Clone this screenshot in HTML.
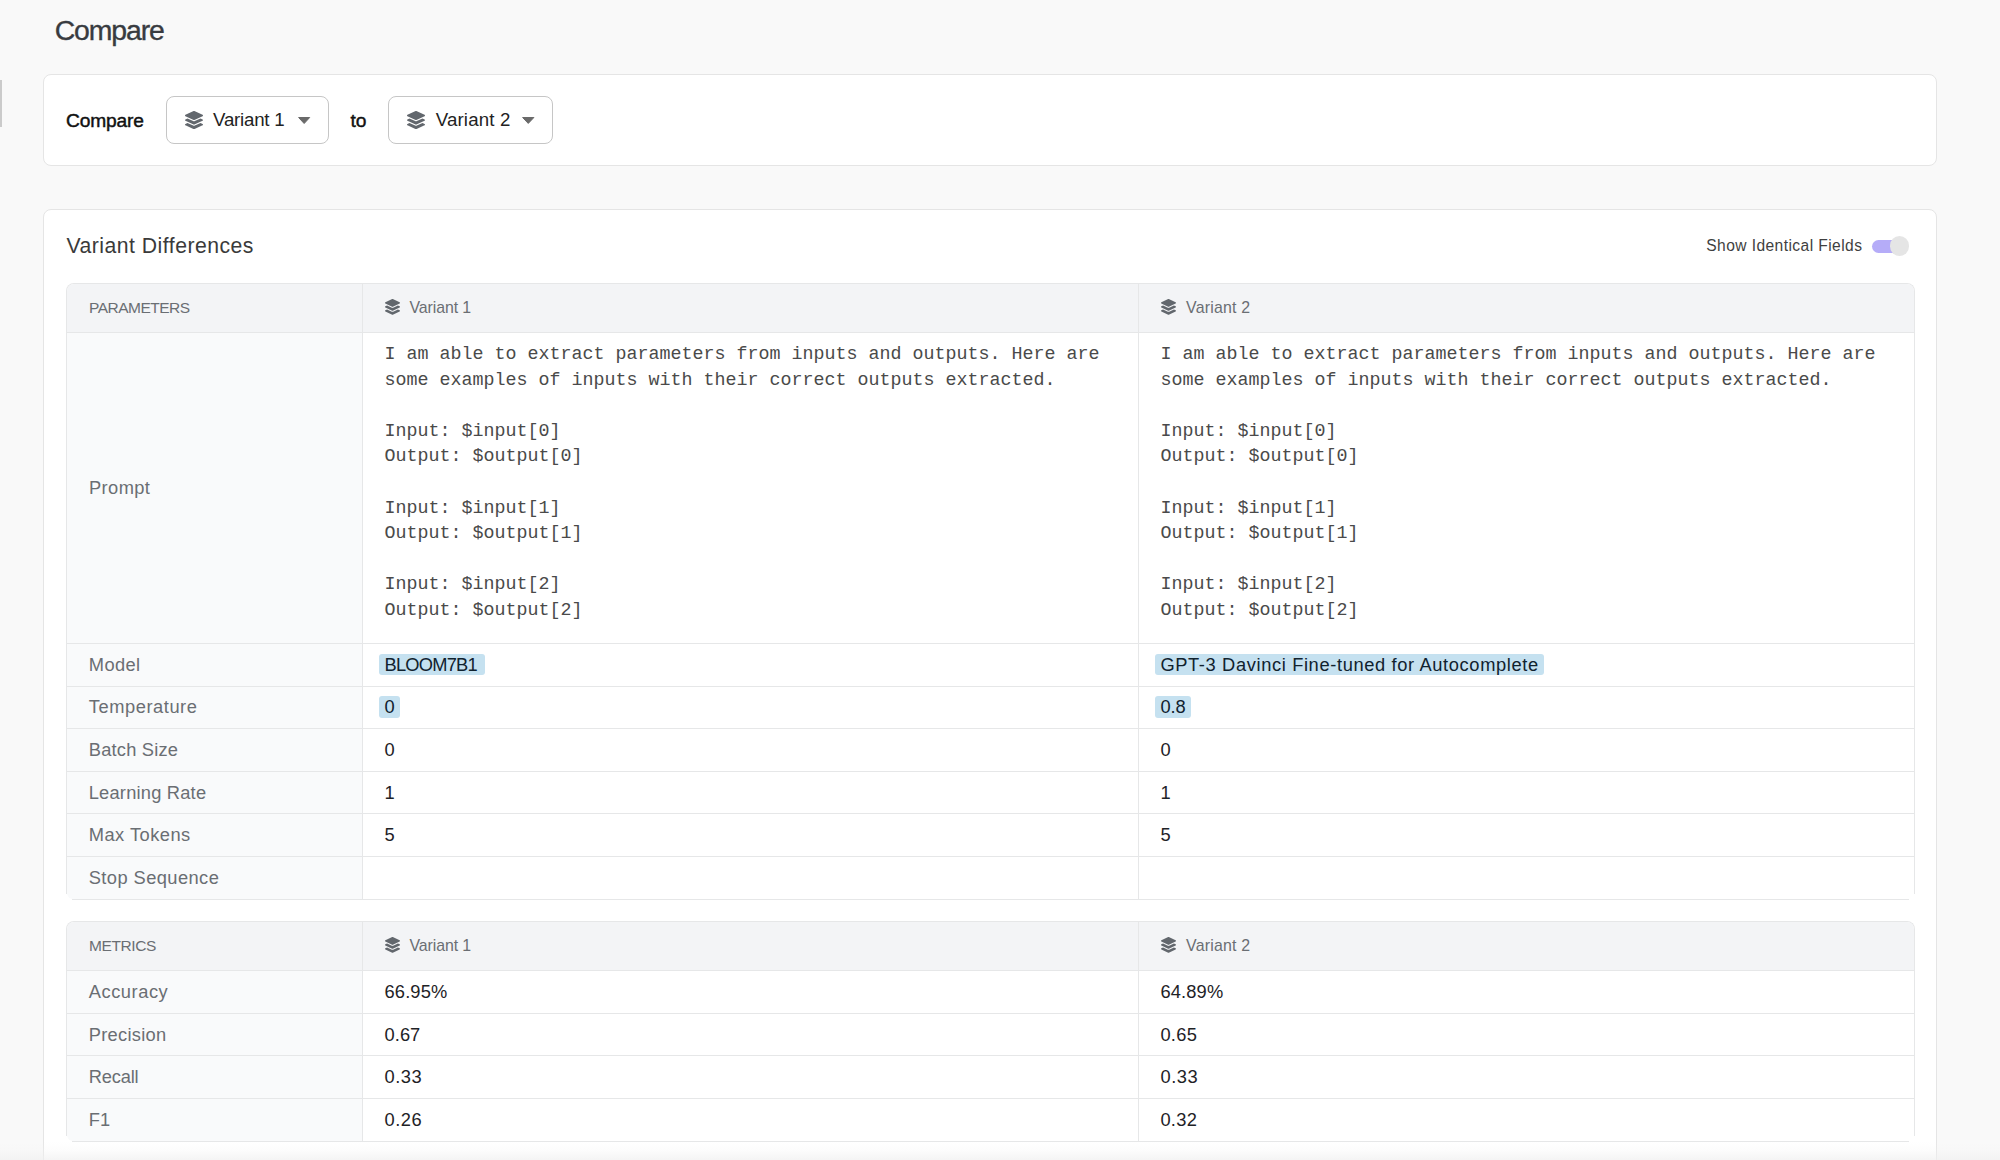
<!DOCTYPE html>
<html><head><meta charset="utf-8"><style>
html,body{margin:0;padding:0}
body{width:2000px;height:1160px;overflow:hidden;position:relative;background:#f9f9f9;font-family:"Liberation Sans",sans-serif}
.t{position:absolute;white-space:nowrap}
</style></head><body>
<div style="position:absolute;left:0px;top:80px;width:1.5px;height:47px;background:#cbcbcb"></div>
<div class="t" style="left:54.70px;top:12.46px;font-size:28.4px;line-height:37px;color:#383b40;letter-spacing:-1.094px;font-family:'Liberation Sans', sans-serif;-webkit-text-stroke:0.35px #383b40">Compare</div>
<div style="position:absolute;left:43px;top:74px;width:1894px;height:92px;background:#fff;border:1px solid #e5e5e5;border-radius:8px;box-sizing:border-box"></div>
<div class="t" style="left:66.00px;top:107.60px;font-size:19.2px;line-height:25px;color:#111;letter-spacing:-0.168px;font-family:'Liberation Sans', sans-serif;-webkit-text-stroke:0.45px #111">Compare</div>
<div style="position:absolute;left:166px;top:96px;width:163px;height:48px;border:1px solid #c6c6c6;border-radius:8px;box-sizing:border-box;background:#fff"></div>
<svg viewBox="0 0 512 512" preserveAspectRatio="none" width="18" height="18.2" style="position:absolute;left:185px;top:110.7px" fill="#62676d"><path d="M12.41 148.02l232.94 105.67c6.8 3.09 14.49 3.09 21.29 0l232.94-105.67c16.55-7.51 16.55-32.52 0-40.03L266.65 2.31a25.607 25.607 0 0 0-21.29 0L12.41 107.98c-16.55 7.51-16.55 32.53 0 40.04zm487.18 88.28l-58.09-26.33-161.64 73.27c-7.56 3.43-15.59 5.17-23.86 5.17s-16.29-1.74-23.86-5.17L70.51 209.97l-58.1 26.33c-16.55 7.5-16.55 32.5 0 40l232.94 105.59c6.8 3.08 14.49 3.08 21.29 0L499.59 276.3c16.55-7.5 16.55-32.5 0-40zm0 127.8l-57.87-26.23-161.86 73.37c-7.56 3.43-15.59 5.17-23.86 5.17s-16.29-1.74-23.86-5.17L70.29 337.87 12.41 364.1c-16.55 7.5-16.55 32.5 0 40l232.94 105.59c6.8 3.08 14.49 3.08 21.29 0L499.59 404.1c16.55-7.5 16.55-32.5 0-40z"/></svg>
<div class="t" style="left:213.10px;top:107.92px;font-size:18.7px;line-height:24px;color:#222;letter-spacing:-0.236px;font-family:'Liberation Sans', sans-serif;">Variant 1</div>
<svg width="14.3" height="8.8" style="position:absolute;left:296.7px;top:116px"><path d="M1.6 1.5 L12.700000000000001 1.5 L7.15 7.5 Z" fill="#6a6a6a" stroke="#6a6a6a" stroke-width="1" stroke-linejoin="round"/></svg>
<div class="t" style="left:350.50px;top:107.60px;font-size:19.2px;line-height:25px;color:#111;letter-spacing:0.000px;font-family:'Liberation Sans', sans-serif;-webkit-text-stroke:0.45px #111">to</div>
<div style="position:absolute;left:388px;top:96px;width:165px;height:48px;border:1px solid #c6c6c6;border-radius:8px;box-sizing:border-box;background:#fff"></div>
<svg viewBox="0 0 512 512" preserveAspectRatio="none" width="18" height="18.2" style="position:absolute;left:407.3px;top:110.6px" fill="#62676d"><path d="M12.41 148.02l232.94 105.67c6.8 3.09 14.49 3.09 21.29 0l232.94-105.67c16.55-7.51 16.55-32.52 0-40.03L266.65 2.31a25.607 25.607 0 0 0-21.29 0L12.41 107.98c-16.55 7.51-16.55 32.53 0 40.04zm487.18 88.28l-58.09-26.33-161.64 73.27c-7.56 3.43-15.59 5.17-23.86 5.17s-16.29-1.74-23.86-5.17L70.51 209.97l-58.1 26.33c-16.55 7.5-16.55 32.5 0 40l232.94 105.59c6.8 3.08 14.49 3.08 21.29 0L499.59 276.3c16.55-7.5 16.55-32.5 0-40zm0 127.8l-57.87-26.23-161.86 73.37c-7.56 3.43-15.59 5.17-23.86 5.17s-16.29-1.74-23.86-5.17L70.29 337.87 12.41 364.1c-16.55 7.5-16.55 32.5 0 40l232.94 105.59c6.8 3.08 14.49 3.08 21.29 0L499.59 404.1c16.55-7.5 16.55-32.5 0-40z"/></svg>
<div class="t" style="left:435.70px;top:107.92px;font-size:18.7px;line-height:24px;color:#222;letter-spacing:0.164px;font-family:'Liberation Sans', sans-serif;">Variant 2</div>
<svg width="14.5" height="8.7" style="position:absolute;left:521px;top:116px"><path d="M1.6 1.5 L12.9 1.5 L7.25 7.4 Z" fill="#6a6a6a" stroke="#6a6a6a" stroke-width="1" stroke-linejoin="round"/></svg>
<div style="position:absolute;left:43px;top:209px;width:1894px;height:1100px;background:#fff;border:1px solid #e5e5e5;border-radius:8px;box-sizing:border-box"></div>
<div class="t" style="left:66.50px;top:231.65px;font-size:21.2px;line-height:28px;color:#3a3a3a;letter-spacing:0.484px;font-family:'Liberation Sans', sans-serif;">Variant Differences</div>
<div class="t" style="left:1706.25px;top:235.69px;font-size:15.6px;line-height:20px;color:#3f3f3f;letter-spacing:0.419px;font-family:'Liberation Sans', sans-serif;">Show Identical Fields</div>
<div style="position:absolute;left:1872px;top:240px;width:34px;height:12.6px;background:#b5acf8;border-radius:7px"></div>
<div style="position:absolute;left:1889.6px;top:236.3px;width:19.6px;height:19.6px;background:#e5e5e5;border-radius:50%"></div>
<div style="position:absolute;left:66px;top:283px;width:1849px;height:611px;border:1px solid #e6e7e8;border-bottom:none;border-radius:8px 8px 0 0;box-sizing:border-box;background:#fff"></div>
<div style="position:absolute;left:67px;top:893px;width:1847px;height:6px;background:#fff"></div>
<div style="position:absolute;left:72px;top:899px;width:1837px;height:1px;background:#e6e7e8"></div>
<div style="position:absolute;left:67px;top:284px;width:1847px;height:48px;background:#f3f4f6;border-radius:7px 7px 0 0"></div>
<div style="position:absolute;left:67px;top:333px;width:295px;height:566px;background:#f9fafb;border-radius:0 0 0 6px"></div>
<div style="position:absolute;left:66px;top:332px;width:1849px;height:1px;background:#e6e7e8"></div>
<div style="position:absolute;left:66px;top:643px;width:1849px;height:1px;background:#e6e7e8"></div>
<div style="position:absolute;left:66px;top:686px;width:1849px;height:1px;background:#e6e7e8"></div>
<div style="position:absolute;left:66px;top:728px;width:1849px;height:1px;background:#e6e7e8"></div>
<div style="position:absolute;left:66px;top:771px;width:1849px;height:1px;background:#e6e7e8"></div>
<div style="position:absolute;left:66px;top:813px;width:1849px;height:1px;background:#e6e7e8"></div>
<div style="position:absolute;left:66px;top:856px;width:1849px;height:1px;background:#e6e7e8"></div>
<div style="position:absolute;left:362px;top:283px;width:1px;height:616px;background:#e6e7e8"></div>
<div style="position:absolute;left:1138px;top:283px;width:1px;height:616px;background:#e6e7e8"></div>
<div class="t" style="left:89.00px;top:297.73px;font-size:15.5px;line-height:20px;color:#6a6e73;letter-spacing:-0.515px;font-family:'Liberation Sans', sans-serif;">PARAMETERS</div>
<svg viewBox="0 0 512 512" preserveAspectRatio="none" width="15" height="15.8" style="position:absolute;left:385px;top:299.0px" fill="#62676d"><path d="M12.41 148.02l232.94 105.67c6.8 3.09 14.49 3.09 21.29 0l232.94-105.67c16.55-7.51 16.55-32.52 0-40.03L266.65 2.31a25.607 25.607 0 0 0-21.29 0L12.41 107.98c-16.55 7.51-16.55 32.53 0 40.04zm487.18 88.28l-58.09-26.33-161.64 73.27c-7.56 3.43-15.59 5.17-23.86 5.17s-16.29-1.74-23.86-5.17L70.51 209.97l-58.1 26.33c-16.55 7.5-16.55 32.5 0 40l232.94 105.59c6.8 3.08 14.49 3.08 21.29 0L499.59 276.3c16.55-7.5 16.55-32.5 0-40zm0 127.8l-57.87-26.23-161.86 73.37c-7.56 3.43-15.59 5.17-23.86 5.17s-16.29-1.74-23.86-5.17L70.29 337.87 12.41 364.1c-16.55 7.5-16.55 32.5 0 40l232.94 105.59c6.8 3.08 14.49 3.08 21.29 0L499.59 404.1c16.55-7.5 16.55-32.5 0-40z"/></svg>
<div class="t" style="left:409.40px;top:296.69px;font-size:15.9px;line-height:21px;color:#6a6e73;letter-spacing:-0.086px;font-family:'Liberation Sans', sans-serif;">Variant 1</div>
<svg viewBox="0 0 512 512" preserveAspectRatio="none" width="15" height="15.8" style="position:absolute;left:1161.1px;top:299.0px" fill="#62676d"><path d="M12.41 148.02l232.94 105.67c6.8 3.09 14.49 3.09 21.29 0l232.94-105.67c16.55-7.51 16.55-32.52 0-40.03L266.65 2.31a25.607 25.607 0 0 0-21.29 0L12.41 107.98c-16.55 7.51-16.55 32.53 0 40.04zm487.18 88.28l-58.09-26.33-161.64 73.27c-7.56 3.43-15.59 5.17-23.86 5.17s-16.29-1.74-23.86-5.17L70.51 209.97l-58.1 26.33c-16.55 7.5-16.55 32.5 0 40l232.94 105.59c6.8 3.08 14.49 3.08 21.29 0L499.59 276.3c16.55-7.5 16.55-32.5 0-40zm0 127.8l-57.87-26.23-161.86 73.37c-7.56 3.43-15.59 5.17-23.86 5.17s-16.29-1.74-23.86-5.17L70.29 337.87 12.41 364.1c-16.55 7.5-16.55 32.5 0 40l232.94 105.59c6.8 3.08 14.49 3.08 21.29 0L499.59 404.1c16.55-7.5 16.55-32.5 0-40z"/></svg>
<div class="t" style="left:1186.00px;top:296.69px;font-size:15.9px;line-height:21px;color:#6a6e73;letter-spacing:0.214px;font-family:'Liberation Sans', sans-serif;">Variant 2</div>
<div style="position:absolute;left:66px;top:921px;width:1849px;height:215px;border:1px solid #e6e7e8;border-bottom:none;border-radius:8px 8px 0 0;box-sizing:border-box;background:#fff"></div>
<div style="position:absolute;left:67px;top:1135px;width:1847px;height:6px;background:#fff"></div>
<div style="position:absolute;left:72px;top:1141px;width:1837px;height:1px;background:#e6e7e8"></div>
<div style="position:absolute;left:67px;top:922px;width:1847px;height:48px;background:#f3f4f6;border-radius:7px 7px 0 0"></div>
<div style="position:absolute;left:67px;top:971px;width:295px;height:170px;background:#f9fafb;border-radius:0 0 0 6px"></div>
<div style="position:absolute;left:66px;top:970px;width:1849px;height:1px;background:#e6e7e8"></div>
<div style="position:absolute;left:66px;top:1013px;width:1849px;height:1px;background:#e6e7e8"></div>
<div style="position:absolute;left:66px;top:1055px;width:1849px;height:1px;background:#e6e7e8"></div>
<div style="position:absolute;left:66px;top:1098px;width:1849px;height:1px;background:#e6e7e8"></div>
<div style="position:absolute;left:362px;top:921px;width:1px;height:220px;background:#e6e7e8"></div>
<div style="position:absolute;left:1138px;top:921px;width:1px;height:220px;background:#e6e7e8"></div>
<div class="t" style="left:89.00px;top:935.73px;font-size:15.5px;line-height:20px;color:#6a6e73;letter-spacing:-0.408px;font-family:'Liberation Sans', sans-serif;">METRICS</div>
<svg viewBox="0 0 512 512" preserveAspectRatio="none" width="15" height="15.8" style="position:absolute;left:385px;top:937.0px" fill="#62676d"><path d="M12.41 148.02l232.94 105.67c6.8 3.09 14.49 3.09 21.29 0l232.94-105.67c16.55-7.51 16.55-32.52 0-40.03L266.65 2.31a25.607 25.607 0 0 0-21.29 0L12.41 107.98c-16.55 7.51-16.55 32.53 0 40.04zm487.18 88.28l-58.09-26.33-161.64 73.27c-7.56 3.43-15.59 5.17-23.86 5.17s-16.29-1.74-23.86-5.17L70.51 209.97l-58.1 26.33c-16.55 7.5-16.55 32.5 0 40l232.94 105.59c6.8 3.08 14.49 3.08 21.29 0L499.59 276.3c16.55-7.5 16.55-32.5 0-40zm0 127.8l-57.87-26.23-161.86 73.37c-7.56 3.43-15.59 5.17-23.86 5.17s-16.29-1.74-23.86-5.17L70.29 337.87 12.41 364.1c-16.55 7.5-16.55 32.5 0 40l232.94 105.59c6.8 3.08 14.49 3.08 21.29 0L499.59 404.1c16.55-7.5 16.55-32.5 0-40z"/></svg>
<div class="t" style="left:409.40px;top:934.69px;font-size:15.9px;line-height:21px;color:#6a6e73;letter-spacing:-0.086px;font-family:'Liberation Sans', sans-serif;">Variant 1</div>
<svg viewBox="0 0 512 512" preserveAspectRatio="none" width="15" height="15.8" style="position:absolute;left:1161.1px;top:937.0px" fill="#62676d"><path d="M12.41 148.02l232.94 105.67c6.8 3.09 14.49 3.09 21.29 0l232.94-105.67c16.55-7.51 16.55-32.52 0-40.03L266.65 2.31a25.607 25.607 0 0 0-21.29 0L12.41 107.98c-16.55 7.51-16.55 32.53 0 40.04zm487.18 88.28l-58.09-26.33-161.64 73.27c-7.56 3.43-15.59 5.17-23.86 5.17s-16.29-1.74-23.86-5.17L70.51 209.97l-58.1 26.33c-16.55 7.5-16.55 32.5 0 40l232.94 105.59c6.8 3.08 14.49 3.08 21.29 0L499.59 276.3c16.55-7.5 16.55-32.5 0-40zm0 127.8l-57.87-26.23-161.86 73.37c-7.56 3.43-15.59 5.17-23.86 5.17s-16.29-1.74-23.86-5.17L70.29 337.87 12.41 364.1c-16.55 7.5-16.55 32.5 0 40l232.94 105.59c6.8 3.08 14.49 3.08 21.29 0L499.59 404.1c16.55-7.5 16.55-32.5 0-40z"/></svg>
<div class="t" style="left:1186.00px;top:934.69px;font-size:15.9px;line-height:21px;color:#6a6e73;letter-spacing:0.214px;font-family:'Liberation Sans', sans-serif;">Variant 2</div>
<div class="t" style="left:89.00px;top:475.56px;font-size:18.3px;line-height:24px;color:#6a6e73;letter-spacing:0.397px;font-family:'Liberation Sans', sans-serif;">Prompt</div>
<div class="t" style="left:384.60px;top:342.92px;font-size:18.33px;line-height:24px;color:#4a4a4a;letter-spacing:0.000px;font-family:'Liberation Mono', monospace;white-space:pre">I am able to extract parameters from inputs and outputs. Here are</div>
<div class="t" style="left:1160.60px;top:342.92px;font-size:18.33px;line-height:24px;color:#4a4a4a;letter-spacing:0.000px;font-family:'Liberation Mono', monospace;white-space:pre">I am able to extract parameters from inputs and outputs. Here are</div>
<div class="t" style="left:384.60px;top:368.52px;font-size:18.33px;line-height:24px;color:#4a4a4a;letter-spacing:0.000px;font-family:'Liberation Mono', monospace;white-space:pre">some examples of inputs with their correct outputs extracted.</div>
<div class="t" style="left:1160.60px;top:368.52px;font-size:18.33px;line-height:24px;color:#4a4a4a;letter-spacing:0.000px;font-family:'Liberation Mono', monospace;white-space:pre">some examples of inputs with their correct outputs extracted.</div>
<div class="t" style="left:384.60px;top:419.72px;font-size:18.33px;line-height:24px;color:#4a4a4a;letter-spacing:0.000px;font-family:'Liberation Mono', monospace;white-space:pre">Input: &#36;input[0]</div>
<div class="t" style="left:1160.60px;top:419.72px;font-size:18.33px;line-height:24px;color:#4a4a4a;letter-spacing:0.000px;font-family:'Liberation Mono', monospace;white-space:pre">Input: &#36;input[0]</div>
<div class="t" style="left:384.60px;top:445.32px;font-size:18.33px;line-height:24px;color:#4a4a4a;letter-spacing:0.000px;font-family:'Liberation Mono', monospace;white-space:pre">Output: &#36;output[0]</div>
<div class="t" style="left:1160.60px;top:445.32px;font-size:18.33px;line-height:24px;color:#4a4a4a;letter-spacing:0.000px;font-family:'Liberation Mono', monospace;white-space:pre">Output: &#36;output[0]</div>
<div class="t" style="left:384.60px;top:496.52px;font-size:18.33px;line-height:24px;color:#4a4a4a;letter-spacing:0.000px;font-family:'Liberation Mono', monospace;white-space:pre">Input: &#36;input[1]</div>
<div class="t" style="left:1160.60px;top:496.52px;font-size:18.33px;line-height:24px;color:#4a4a4a;letter-spacing:0.000px;font-family:'Liberation Mono', monospace;white-space:pre">Input: &#36;input[1]</div>
<div class="t" style="left:384.60px;top:522.12px;font-size:18.33px;line-height:24px;color:#4a4a4a;letter-spacing:0.000px;font-family:'Liberation Mono', monospace;white-space:pre">Output: &#36;output[1]</div>
<div class="t" style="left:1160.60px;top:522.12px;font-size:18.33px;line-height:24px;color:#4a4a4a;letter-spacing:0.000px;font-family:'Liberation Mono', monospace;white-space:pre">Output: &#36;output[1]</div>
<div class="t" style="left:384.60px;top:573.32px;font-size:18.33px;line-height:24px;color:#4a4a4a;letter-spacing:0.000px;font-family:'Liberation Mono', monospace;white-space:pre">Input: &#36;input[2]</div>
<div class="t" style="left:1160.60px;top:573.32px;font-size:18.33px;line-height:24px;color:#4a4a4a;letter-spacing:0.000px;font-family:'Liberation Mono', monospace;white-space:pre">Input: &#36;input[2]</div>
<div class="t" style="left:384.60px;top:598.92px;font-size:18.33px;line-height:24px;color:#4a4a4a;letter-spacing:0.000px;font-family:'Liberation Mono', monospace;white-space:pre">Output: &#36;output[2]</div>
<div class="t" style="left:1160.60px;top:598.92px;font-size:18.33px;line-height:24px;color:#4a4a4a;letter-spacing:0.000px;font-family:'Liberation Mono', monospace;white-space:pre">Output: &#36;output[2]</div>
<div style="position:absolute;left:379px;top:653.5px;width:105.5px;height:21.5px;background:#c5e1f0;border-radius:3px"></div>
<div style="position:absolute;left:1155.2px;top:653.5px;width:388.5px;height:21.5px;background:#c5e1f0;border-radius:3px"></div>
<div style="position:absolute;left:379px;top:696.2px;width:20.7px;height:21.5px;background:#c5e1f0;border-radius:3px"></div>
<div style="position:absolute;left:1155.2px;top:696.2px;width:36px;height:21.5px;background:#c5e1f0;border-radius:3px"></div>
<div class="t" style="left:88.75px;top:652.51px;font-size:18.3px;line-height:24px;color:#6a6e73;letter-spacing:0.408px;font-family:'Liberation Sans', sans-serif;">Model</div>
<div class="t" style="left:384.50px;top:652.51px;font-size:18.3px;line-height:24px;color:#10222e;letter-spacing:-0.762px;font-family:'Liberation Sans', sans-serif;">BLOOM7B1</div>
<div class="t" style="left:1160.40px;top:652.51px;font-size:18.3px;line-height:24px;color:#10222e;letter-spacing:0.630px;font-family:'Liberation Sans', sans-serif;">GPT-3 Davinci Fine-tuned for Autocomplete</div>
<div class="t" style="left:88.75px;top:695.19px;font-size:18.3px;line-height:24px;color:#6a6e73;letter-spacing:0.555px;font-family:'Liberation Sans', sans-serif;">Temperature</div>
<div class="t" style="left:384.50px;top:695.19px;font-size:18.3px;line-height:24px;color:#10222e;letter-spacing:0.000px;font-family:'Liberation Sans', sans-serif;">0</div>
<div class="t" style="left:1160.40px;top:695.19px;font-size:18.3px;line-height:24px;color:#10222e;letter-spacing:-0.069px;font-family:'Liberation Sans', sans-serif;">0.8</div>
<div class="t" style="left:88.75px;top:737.87px;font-size:18.3px;line-height:24px;color:#6a6e73;letter-spacing:0.203px;font-family:'Liberation Sans', sans-serif;">Batch Size</div>
<div class="t" style="left:384.50px;top:737.87px;font-size:18.3px;line-height:24px;color:#1e2226;letter-spacing:0.000px;font-family:'Liberation Sans', sans-serif;">0</div>
<div class="t" style="left:1160.40px;top:737.87px;font-size:18.3px;line-height:24px;color:#1e2226;letter-spacing:0.000px;font-family:'Liberation Sans', sans-serif;">0</div>
<div class="t" style="left:88.75px;top:780.55px;font-size:18.3px;line-height:24px;color:#6a6e73;letter-spacing:0.206px;font-family:'Liberation Sans', sans-serif;">Learning Rate</div>
<div class="t" style="left:384.50px;top:780.55px;font-size:18.3px;line-height:24px;color:#1e2226;letter-spacing:0.000px;font-family:'Liberation Sans', sans-serif;">1</div>
<div class="t" style="left:1160.40px;top:780.55px;font-size:18.3px;line-height:24px;color:#1e2226;letter-spacing:0.000px;font-family:'Liberation Sans', sans-serif;">1</div>
<div class="t" style="left:88.75px;top:823.23px;font-size:18.3px;line-height:24px;color:#6a6e73;letter-spacing:0.472px;font-family:'Liberation Sans', sans-serif;">Max Tokens</div>
<div class="t" style="left:384.50px;top:823.23px;font-size:18.3px;line-height:24px;color:#1e2226;letter-spacing:0.000px;font-family:'Liberation Sans', sans-serif;">5</div>
<div class="t" style="left:1160.40px;top:823.23px;font-size:18.3px;line-height:24px;color:#1e2226;letter-spacing:0.000px;font-family:'Liberation Sans', sans-serif;">5</div>
<div class="t" style="left:88.75px;top:865.91px;font-size:18.3px;line-height:24px;color:#6a6e73;letter-spacing:0.419px;font-family:'Liberation Sans', sans-serif;">Stop Sequence</div>
<div class="t" style="left:88.75px;top:979.96px;font-size:18.3px;line-height:24px;color:#6a6e73;letter-spacing:0.541px;font-family:'Liberation Sans', sans-serif;">Accuracy</div>
<div class="t" style="left:384.50px;top:979.96px;font-size:18.3px;line-height:24px;color:#1e2226;letter-spacing:0.153px;font-family:'Liberation Sans', sans-serif;">66.95%</div>
<div class="t" style="left:1160.40px;top:979.96px;font-size:18.3px;line-height:24px;color:#1e2226;letter-spacing:0.153px;font-family:'Liberation Sans', sans-serif;">64.89%</div>
<div class="t" style="left:88.75px;top:1022.66px;font-size:18.3px;line-height:24px;color:#6a6e73;letter-spacing:0.287px;font-family:'Liberation Sans', sans-serif;">Precision</div>
<div class="t" style="left:384.50px;top:1022.66px;font-size:18.3px;line-height:24px;color:#1e2226;letter-spacing:0.069px;font-family:'Liberation Sans', sans-serif;">0.67</div>
<div class="t" style="left:1160.40px;top:1022.66px;font-size:18.3px;line-height:24px;color:#1e2226;letter-spacing:0.302px;font-family:'Liberation Sans', sans-serif;">0.65</div>
<div class="t" style="left:88.75px;top:1065.36px;font-size:18.3px;line-height:24px;color:#6a6e73;letter-spacing:-0.175px;font-family:'Liberation Sans', sans-serif;">Recall</div>
<div class="t" style="left:384.50px;top:1065.36px;font-size:18.3px;line-height:24px;color:#1e2226;letter-spacing:0.535px;font-family:'Liberation Sans', sans-serif;">0.33</div>
<div class="t" style="left:1160.40px;top:1065.36px;font-size:18.3px;line-height:24px;color:#1e2226;letter-spacing:0.569px;font-family:'Liberation Sans', sans-serif;">0.33</div>
<div class="t" style="left:88.75px;top:1108.06px;font-size:18.3px;line-height:24px;color:#6a6e73;letter-spacing:0.000px;font-family:'Liberation Sans', sans-serif;">F1</div>
<div class="t" style="left:384.50px;top:1108.06px;font-size:18.3px;line-height:24px;color:#1e2226;letter-spacing:0.535px;font-family:'Liberation Sans', sans-serif;">0.26</div>
<div class="t" style="left:1160.40px;top:1108.06px;font-size:18.3px;line-height:24px;color:#1e2226;letter-spacing:0.302px;font-family:'Liberation Sans', sans-serif;">0.32</div>
<div style="position:absolute;left:0px;top:1142px;width:2000px;height:18px;background:linear-gradient(to bottom, rgba(243,243,243,0) 0%, rgba(243,243,243,0.25) 50%, rgba(240,240,240,0.7) 100%)"></div>
</body></html>
